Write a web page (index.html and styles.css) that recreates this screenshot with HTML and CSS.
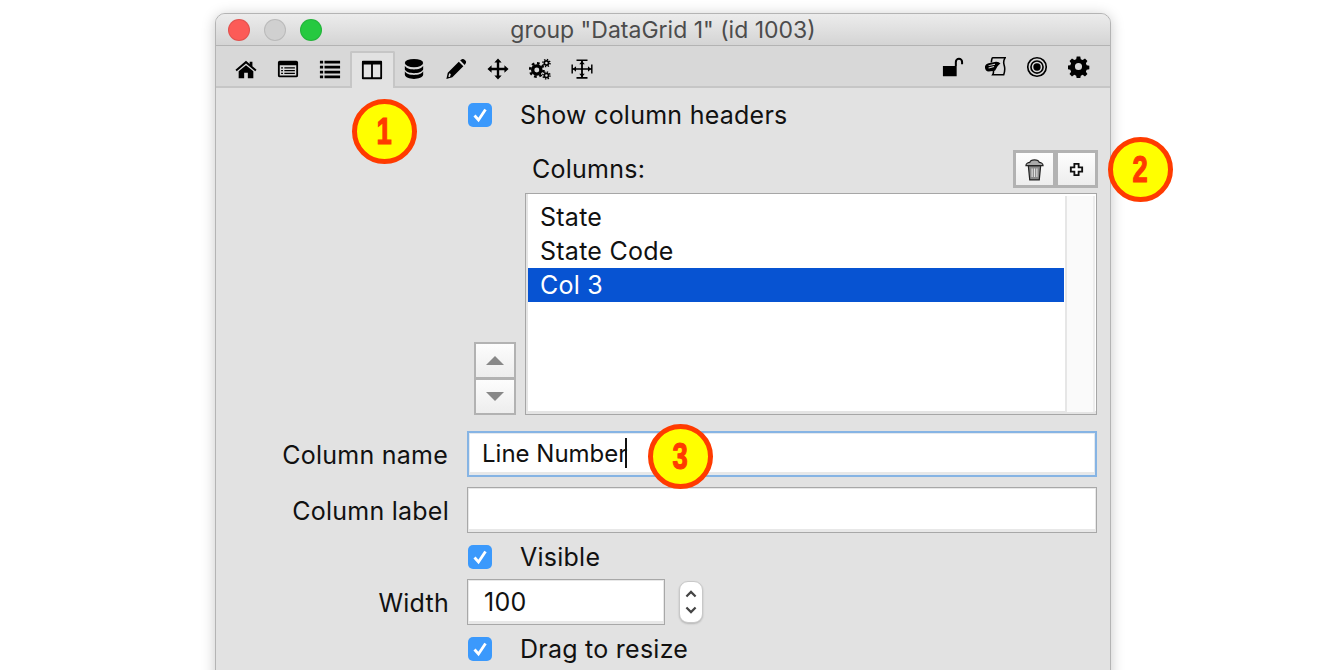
FILE: index.html
```html
<!DOCTYPE html>
<html lang="en">
<head>
<meta charset="utf-8">
<title>group "DataGrid 1" (id 1003)</title>
<link rel="stylesheet" href="styles.css">
</head>
<body>
<div class="page">
  <div class="window">
    <header class="titlebar">
      <div class="lights"><span class="light red"></span><span class="light grey"></span><span class="light green"></span></div>
      <div class="title">group "DataGrid 1" (id 1003)</div>
    </header>
    <nav class="toolbar">
      <div class="tools">
        <span class="tool"><svg viewBox="0 0 24 24" class="icon"><path d="M12 3 0.500 12.800l1.400 1.600L12 5.900l10.100 8.500 1.400-1.600-4.500-3.800V4h-3v2.500z"/><path d="M12 7.800 4 14.500V22h6v-6h4v6h6v-7.500z"/></svg></span>
        <span class="tool"><svg viewBox="0 0 24 24" class="icon"><path fill-rule="evenodd" d="M3 3h18a2 2 0 0 1 2 2v14a2 2 0 0 1-2 2H3a2 2 0 0 1-2-2V5a2 2 0 0 1 2-2zm0 5v11h18V8z"/><path d="M4.500 10h2v1.500h-2zM8 10h11.500v1.500H8zM4.500 13h2v1.500h-2zM8 13h11.500v1.500H8zM4.500 16h2v1.500h-2zM8 16h11.500v1.500H8z"/></svg></span>
        <span class="tool"><svg viewBox="0 0 24 24" class="icon"><path d="M1 3h3.500v3H1zM6 3h17v3H6zM1 8.500h3.500v3H1zM6 8.500h17v3H6zM1 14h3.500v3H1zM6 14h17v3H6zM1 19h3.500v3H1zM6 19h17v3H6z"/></svg></span>
        <span class="tool tool-active"><svg viewBox="0 0 24 24" class="icon"><path fill-rule="evenodd" d="M2 2h20a1 1 0 0 1 1 1v18a1 1 0 0 1-1 1H2a1 1 0 0 1-1-1V3a1 1 0 0 1 1-1zm1 4v14h8V6zm10 0v14h8V6z"/></svg></span>
        <span class="tool"><svg viewBox="0 0 24 24" class="icon"><ellipse cx="12" cy="5.500" rx="10" ry="4.500"/><path d="M2 8.500c1 2.700 5.500 4 10 4s9-1.300 10-4v4c-1 2.700-5.500 4-10 4s-9-1.300-10-4z"/><path d="M2 14.500c1 2.700 5.500 4 10 4s9-1.300 10-4v4c-.5 2.300-5 4.300-10 4.300s-9.500-2-10-4.300z"/></svg></span>
        <span class="tool"><svg viewBox="0 0 24 24" class="icon"><path d="M16.500 2.500 19 1.200a2 2 0 0 1 2 .4l1.500 1.500a2 2 0 0 1 .3 2.300L21.500 7.500zM15 4l5 5L8 21l-6.500 2L3 16zM4.700 16.500 3.600 20.400l1.800.2 1-3.200z"/></svg></span>
        <span class="tool"><svg viewBox="0 0 24 24" class="icon"><path d="M12 0.500 16 5h-2.700v5.700H19V8l4.500 4-4.500 4v-2.700h-5.700V19H16l-4 4.500L8 19h2.700v-5.700H5V16L0.500 12 5 8v2.700h5.700V5H8z"/></svg></span>
        <span class="tool"><svg viewBox="0 0 24 24" class="icon gears"><circle class="g-body" cx="8.500" cy="13" r="4.500" stroke-width="3.600"/><circle class="g-teeth" cx="8.500" cy="13" r="7.300" stroke-width="2.800" stroke-dasharray="2.900 2.830"/><circle class="g-body" cx="19" cy="5.500" r="2.300" stroke-width="1.800"/><circle class="g-teeth" cx="19" cy="5.500" r="3.900" stroke-width="1.600" stroke-dasharray="1.500 1.560"/><circle class="g-body" cx="19" cy="19" r="2.300" stroke-width="1.800"/><circle class="g-teeth" cx="19" cy="19" r="3.900" stroke-width="1.600" stroke-dasharray="1.500 1.560"/></svg></span>
        <span class="tool"><svg viewBox="0 0 24 24" class="icon"><path d="M0.500 7h1.600v10H0.500zM21.900 7h1.600v10h-1.600zM6 1.500h12v1.800H6zM6 20.700h12v1.800H6zM11 3.300h2V20.700h-2zM2 11.200h20v1.600H2z"/><path d="M2 12l3.500-3v6zM22 12l-3.500-3v6zM12 3.300l3 3.500H9zM12 20.700 9 17.200h6z"/></svg></span>
      </div>
      <div class="tools tools-right">
        <span class="tool"><svg viewBox="0 0 24 24" class="icon"><path d="M1 11h15v11H1z"/><path d="M14 11V6.500a4.500 4.500 0 0 1 9 0V9h-2.200V6.500a2.300 2.300 0 0 0-4.600 0V11z"/></svg></span>
        <span class="tool"><svg viewBox="0 0 24 24" class="icon"><path class="paper" d="M9 2h14c-2 3-2 5-1 8 1 3 1 6-.5 10.500H9.500c1-1.500 1-3 .7-4.500M8 7c0-2 .5-3.500 1-5"/><path d="M1 12c0-2 2-3.500 4-4l8-1.800c2-.3 4 1 5 1.800l-3 3-3 5-7 1c-2.500 0-4-2.500-4-5z"/><path class="hand-line" d="M5 10.500l7-1.500M5 13l6-1.500"/></svg></span>
        <span class="tool"><svg viewBox="0 0 24 24" class="icon"><path fill-rule="evenodd" d="M12 1a11 11 0 1 1 0 22 11 11 0 0 1 0-22zm0 1.800a9.200 9.200 0 1 0 0 18.400 9.200 9.200 0 0 0 0-18.400z"/><path fill-rule="evenodd" d="M12 4.500a7.500 7.500 0 1 1 0 15 7.500 7.500 0 0 1 0-15zm0 1.800a5.700 5.700 0 1 0 0 11.400 5.700 5.700 0 0 0 0-11.400z"/><circle cx="12" cy="12" r="4"/></svg></span>
        <span class="tool"><svg viewBox="0 0 24 24" class="icon"><path fill-rule="evenodd" d="M10 .8h4l.6 3.100 2.100.9 2.600-1.800 2.800 2.800-1.800 2.600.9 2.100 3 .6v4l-3 .6-.9 2.100 1.800 2.600-2.800 2.800-2.600-1.800-2.100.9-.6 3h-4l-.6-3-2.100-.9-2.600 1.800-2.800-2.800 1.800-2.600-.9-2.100-3-.6v-4l3-.6.9-2.100-1.800-2.600 2.800-2.800 2.600 1.800 2.100-.9zM12 8a4 4 0 1 0 0 8 4 4 0 0 0 0-8z" transform="translate(-.2 -.2) scale(.97)"/></svg></span>
      </div>
    </nav>
    <main class="content">
      <div class="form">
        <div class="spacer"></div>
        <div class="check-row row-show"><span class="check"><svg viewBox="0 0 24 24"><path d="M6.500 12.500 10.500 17l7-10.500"/></svg></span><span>Show column headers</span></div>

        <div class="spacer"></div>
        <div class="columns">
          <div class="stepper">
            <div class="step"><span class="arrow-up"></span></div>
            <div class="step"><span class="arrow-down"></span></div>
          </div>
          <div class="columns-main">
            <div class="columns-head">
              <span class="columns-label">Columns:</span>
              <div class="head-buttons">
                <div class="head-btn"><svg viewBox="0 0 20 24" class="btn-icon"><path d="M3.500 8h13l-1.500 15H5z" fill="#8a8a8a" stroke="#222" stroke-width="1.300"/><path d="M7.500 11v9M10 11v9M12.500 11v9" stroke="#e4e4e4" stroke-width="1.200"/><path d="M1 8c0-2.500 2.500-3.500 4-3.500C6 1 14 1 15 4.500c1.500 0 4 1 4 3.500z" fill="#aaa" stroke="#222" stroke-width="1.300"/></svg></div>
                <div class="head-btn"><svg viewBox="0 0 24 24" class="btn-icon"><path d="M9 4h6v5h5v6h-5v5H9v-5H4V9h5z" fill="#fff" stroke="#111" stroke-width="2.600"/></svg></div>
              </div>
            </div>
            <div class="listbox">
              <div class="list-items">
                <div class="list-item">State</div>
                <div class="list-item">State Code</div>
                <div class="list-item selected">Col 3</div>
              </div>
              <div class="list-scroll"></div>
            </div>
          </div>
        </div>

        <label class="field-label label-name">Column name</label>
        <div class="input input-focus">Line Number<span class="caret"></span></div>

        <label class="field-label label-col">Column label</label>
        <div class="input"></div>

        <div class="spacer"></div>
        <div class="check-row row-visible"><span class="check"><svg viewBox="0 0 24 24"><path d="M6.500 12.500 10.500 17l7-10.500"/></svg></span><span>Visible</span></div>

        <label class="field-label label-col">Width</label>
        <div class="width-row">
          <div class="input input-width">100</div>
          <div class="spinner"><svg viewBox="0 0 24 42"><path d="M7 15l5-5 5 5M7 27l5 5 5-5"/></svg></div>
        </div>

        <div class="spacer"></div>
        <div class="check-row row-drag"><span class="check"><svg viewBox="0 0 24 24"><path d="M6.500 12.500 10.500 17l7-10.500"/></svg></span><span>Drag to resize</span></div>
      </div>
    </main>
  </div>
  <div class="badge badge-1"><span class="digit">1</span></div>
  <div class="badge badge-2"><span class="digit">2</span></div>
  <div class="badge badge-3"><span class="digit">3</span></div>
</div>
</body>
</html>
```

FILE: styles.css
```css
* { box-sizing: border-box; }
html, body { margin: 0; height: 100%; background: #fff; overflow: hidden; }
body { font-family: Inter, "Noto Sans", "Liberation Sans", sans-serif; color: #111; }

.page { position: relative; width: 1328px; height: 670px; overflow: hidden; padding: 13px 0 0 215px; }

.window {
  width: 896px;
  height: 680px;
  border: 1px solid #b4b4b4;
  border-radius: 10px 10px 0 0;
  box-shadow: 0 2px 14px rgba(0,0,0,.22);
  background: #e2e2e2;
  overflow: hidden;
}

.titlebar {
  position: relative;
  height: 32px;
  background: linear-gradient(#ececec, #d4d4d4);
  border-bottom: 1px solid #b3b3b3;
  display: flex;
  align-items: center;
  justify-content: center;
}
.lights { position: absolute; left: 12px; top: 5px; display: flex; gap: 14px; }
.light { width: 22px; height: 22px; border-radius: 50%; border: 1px solid rgba(0,0,0,.1); }
.red { background: #fc5b57; }
.grey { background: #d0d0d0; }
.green { background: #26c940; }
.title { font-size: 23px; color: #4c4c4c; }

.toolbar {
  height: 42px;
  background: #d8d8d8;
  border-bottom: 2px solid #c6c6c6;
  display: flex;
  justify-content: space-between;
  padding: 5px 10px 0 9px;
}
.tools { display: flex; }
.tool { width: 42px; height: 37px; display: flex; align-items: center; justify-content: center; padding-bottom: 2px; }
.tools-right .tool { padding-bottom: 6px; }
.tool-active {
  background: #e2e2e2;
  border: 2px solid #c6c6c6;
  border-bottom: 0;
  border-radius: 2px 2px 0 0;
  width: 45px;
  margin: 0 -1.500px;
}
.icon { width: 22px; height: 22px; fill: #000; display: block; }
.g-body, .g-teeth { fill: none; stroke: #000; }
.paper { fill: none; stroke: #000; stroke-width: 1.700; }
.hand-line { fill: none; stroke: #d8d8d8; stroke-width: 1.100; }

.content { height: 600px; }
.form {
  display: grid;
  grid-template-columns: 252px 630px;
  font-size: 25px;
  letter-spacing: .25px;
  align-items: center;
}
.spacer { height: 1px; }

.check-row { display: flex; align-items: center; gap: 28px; height: 24px; }
.row-show { margin-top: 15px; }
.row-visible { margin-top: 12px; }
.row-drag { margin-top: 12px; }
.check { width: 24px; height: 24px; border-radius: 5px; background: #3b99fc; display: block; flex: none; }
.check svg { width: 24px; height: 24px; display: block; }
.check path { fill: none; stroke: #fff; stroke-width: 2.800; }

.columns { grid-column: 2; display: flex; margin-top: 23px; align-items: flex-end; }
.stepper { margin: 0 9px 0 6px; width: 42px; }
.step {
  height: 37px;
  border: 2px solid #b2b2b2;
  background: linear-gradient(#fdfdfd, #ededed);
  display: flex;
  align-items: center;
  justify-content: center;
}
.step + .step { margin-top: -1px; height: 37px; }
.arrow-up { border: 9px solid transparent; border-top: 0; border-bottom: 9px solid #888; }
.arrow-down { border: 9px solid transparent; border-bottom: 0; border-top: 9px solid #888; }

.columns-main { width: 573px; }
.columns-head { display: flex; justify-content: space-between; align-items: center; height: 38px; padding-left: 7px; margin-bottom: 5px; }
.head-buttons { display: flex; }
.head-btn {
  width: 43px;
  height: 38px;
  border: 3px solid #b2b2b2;
  background: linear-gradient(#fdfdfd, #ededed);
  display: flex;
  align-items: center;
  justify-content: center;
}
.head-btn + .head-btn { margin-left: -1px; }
.btn-icon { width: 19px; height: 23px; display: block; }
.head-btn + .head-btn .btn-icon { width: 17px; height: 17px; }

.listbox {
  display: flex;
  height: 222px;
  width: 572px;
  border: 1px solid #a6a6a6;
  padding: 2px;
  background: #fff;
  box-shadow: inset 0 -3px 0 #e4e4e4, inset 2px 0 0 #e4e4e4;
}
.list-items { flex: 1; padding-top: 4px; }
.list-item { height: 34px; line-height: 34px; padding-left: 12px; width: 536px; color: #111; }
.selected { background: #0753d2; color: #fff; }
.list-scroll { width: 30px; height: 216px; margin-right: -1px; background: #fafafa; border-left: 2px solid #e6e6e6; border-right: 2px solid #ededed; }

.field-label { text-align: right; padding-top: 2px; }
.label-col { padding-right: 19px; margin-top: 10px; }
.label-name { padding-right: 20px; margin-top: 16px; }

.input {
  height: 46px;
  width: 630px;
  margin-left: -1px;
  border: 1px solid #a8a8a8;
  background: #fff;
  box-shadow: inset 1px 1px 0 #e8e8e8, inset -1px 0 0 #e8e8e8, inset 0 -3px 0 #e8e8e8;
  padding-left: 16px;
  font-size: 25px;
  display: flex;
  align-items: center;
}
.label-name + .input { margin-top: 16px; }
.label-col + .input { margin-top: 10px; }
.input-focus {
  font-size: 24px;
  letter-spacing: 0;
  border: 2px solid #86b4e4;
  padding: 0 0 2px 13px;
  box-shadow: inset 0 0 0 1px #e4e9ee, inset 0 -3px 0 #e8e8e8;
}
.caret { display: inline-block; width: 2px; height: 30px; background: #111; margin-left: -2px; }

.width-row { display: flex; align-items: center; margin-top: 10px; }
.width-row .input { margin-top: 0; }
.input-width { width: 198px; }
.spinner {
  width: 24px;
  height: 42px;
  margin-left: 14px;
  border-radius: 9px;
  background: #fff;
  border: 1px solid #c8c8c8;
  box-shadow: 0 1px 2px rgba(0,0,0,.2);
}
.spinner svg { display: block; width: 22px; height: 40px; }
.spinner path { fill: none; stroke: #444; stroke-width: 2.400; }

.badge {
  position: absolute;
  width: 65px;
  height: 65px;
  border-radius: 50%;
  background: #ff0;
  border: 5px solid #ff3b00;
  color: #ff3b00;
  font-family: "Liberation Sans", sans-serif;
  font-weight: 700;
  font-size: 36px;
  display: flex;
  align-items: center;
  justify-content: center;
  -webkit-text-stroke: 1.200px #ff3b00;
}
.digit { display: block; transform: scaleX(.76); }
.badge-1 { left: 352px; top: 99px; }
.badge-2 { left: 1108px; top: 137px; }
.badge-3 { left: 648px; top: 424px; }
```
